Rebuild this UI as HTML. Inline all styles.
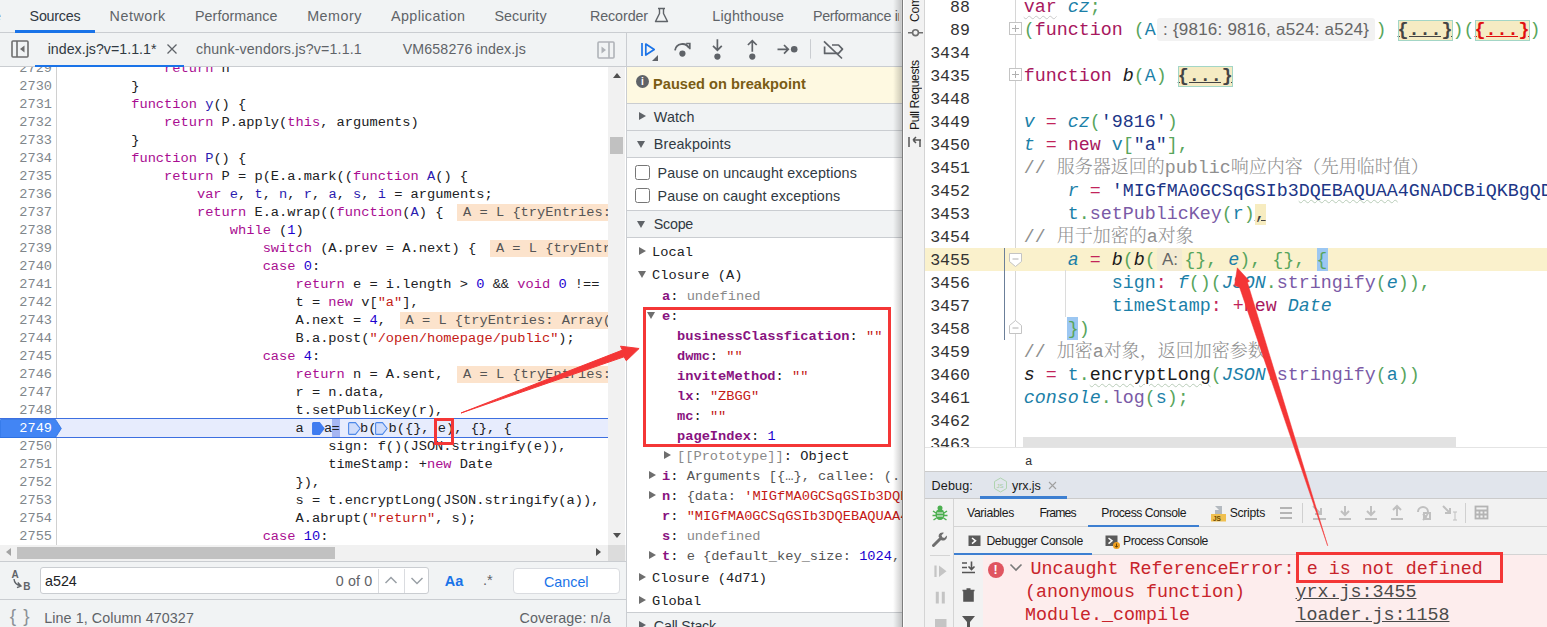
<!DOCTYPE html><html><head><meta charset="utf-8"><title>debug</title><style>
*{box-sizing:border-box;margin:0;padding:0}
html,body{width:1547px;height:627px;overflow:hidden;background:#fff}
body{position:relative;font-family:"Liberation Sans","Noto Sans CJK SC",sans-serif;color:#303942}
.abs{position:absolute}
.t{position:absolute;white-space:pre;line-height:1}
#dt{position:absolute;left:0;top:0;width:902px;height:627px;background:#fff;overflow:hidden}
#ide{position:absolute;left:901px;top:0;width:646px;height:627px}
.tab{position:absolute;top:0;height:32px;line-height:32px;font-size:14.3px;color:#5f6368;white-space:pre}
.ftab{position:absolute;top:33px;height:33px;line-height:33px;font-size:14.2px;color:#5f6368;white-space:pre}
.cl{position:absolute;left:0;width:609px;height:18px;line-height:18px;font-family:"Liberation Mono",monospace;font-size:13.7px;white-space:pre;color:#202124}
.ln{position:absolute;left:0;width:52px;text-align:right;color:#80868b;font-size:13.6px}
.cd{position:absolute;left:65.5px}
.k{color:#a90d91}.d{color:#2b1cb0}.s{color:#c41a16}.n{color:#1c00cf}
.iv{background:#fce3cc;color:#555;padding:1px 0 1px 6px;margin-left:5.5px}
.sh{position:absolute;left:627px;width:275px;height:27px;background:#f1f3f4;border-top:1px solid #cacdd1;font-size:14.3px;color:#303942;line-height:26px}
.sr{position:absolute;left:627px;width:275px;height:20px;line-height:20px;font-family:"Liberation Mono",monospace;font-size:13.7px;white-space:pre;color:#202124}
.pn{color:#881280;font-weight:bold}
.gy{color:#8a8a8a}
.tri{position:absolute;width:0;height:0}
.il{position:absolute;left:23px;width:623px;height:23px;line-height:23px;font-family:"Liberation Mono","Noto Sans CJK SC",monospace;font-size:18.33px;white-space:pre;color:#1a1a1a}
.iln{position:absolute;left:0;width:46px;text-align:right;color:#333;font-size:16.6px}
.icd{position:absolute;left:99.7px}
.cj{font-size:18px}.ik{color:#a8185e}.iv2{color:#1b7fa8;font-style:italic}.ip{color:#58a55c}.is{color:#1c3687}.ic{color:#8f8f8f;font-family:"Liberation Mono","Noto Serif CJK SC",monospace;font-weight:300}.im{color:#7a5aa6}.io{color:#c2245a}.it{color:#1b7fa8}
.fold{background:#f5ebc3;outline:1.5px solid #a3d6c6;outline-offset:-1.5px;color:#444;font-weight:bold;text-decoration:underline}
.ib{font-size:12.2px;color:#1a1a1a;position:absolute;white-space:pre}
.er{position:absolute;font-family:"Liberation Mono",monospace;font-size:18.33px;color:#c8242b;white-space:pre;height:23px;line-height:23px}
.lk{color:#4a4a4a;text-decoration:underline}
</style></head><body><div id="dt"><div class="abs" style="left:0;top:0;width:901px;height:33px;background:#f1f3f4;border-bottom:1px solid #cacdd1"></div><div class="tab" style="left:-7px">e</div><div class="tab" style="left:29.6px;letter-spacing:-0.251px;color:#303942;">Sources</div><div class="tab" style="left:109.6px;letter-spacing:0.522px;">Network</div><div class="tab" style="left:195px;letter-spacing:0.067px;">Performance</div><div class="tab" style="left:307.2px;letter-spacing:0.526px;">Memory</div><div class="tab" style="left:391px;letter-spacing:0.413px;">Application</div><div class="tab" style="left:494.5px;letter-spacing:0.055px;">Security</div><div class="tab" style="left:590px;letter-spacing:-0.102px;">Recorder</div><div class="tab" style="left:712.3px;letter-spacing:0.193px;">Lighthouse</div><div class="tab" style="left:813px;letter-spacing:-0.347px;width:85.5px;overflow:hidden;">Performance insights</div><div class="abs" style="left:15px;top:30.4px;width:80px;height:2.2px;background:#1a73e8"></div><svg class="abs" style="left:653px;top:7px" width="17" height="17" viewBox="0 0 17 17"><path d="M5 1.5h7M6.5 1.5v5L2.5 14.5h12L10.5 6.5v-5" fill="none" stroke="#5f6368" stroke-width="1.4" stroke-linejoin="round"/></svg><div class="abs" style="left:0;top:33px;width:627px;height:34px;background:#f1f3f4;border-bottom:1px solid #cacdd1"></div><svg class="abs" style="left:11px;top:40px" width="18" height="18" viewBox="0 0 18 18"><rect x="1" y="1" width="16" height="16" rx="1" fill="none" stroke="#6e6e6e" stroke-width="1.6"/><path d="M6 1v16" stroke="#6e6e6e" stroke-width="1.6"/><path d="M13.5 5.5v7L9 9z" fill="#6e6e6e"/></svg><div class="ftab" style="left:47.7px;color:#303942;letter-spacing:0.021px;">index.js?v=1.1.1*</div><svg class="abs" style="left:166px;top:43px" width="12" height="12" viewBox="0 0 12 12"><path d="M1.5 1.5l9 9M10.5 1.5l-9 9" stroke="#5f6368" stroke-width="1.3"/></svg><div class="abs" style="left:35px;top:64.5px;width:149px;height:2.1px;background:#1a73e8"></div><div class="ftab" style="left:196px;letter-spacing:0.158px;">chunk-vendors.js?v=1.1.1</div><div class="ftab" style="left:402.7px;letter-spacing:0.148px;">VM658276 index.js</div><svg class="abs" style="left:596.7px;top:40.7px" width="18" height="18" viewBox="0 0 18 18"><rect x="1" y="1" width="16" height="16" rx="1" fill="none" stroke="#b0b3b8" stroke-width="1.6"/><path d="M12 1v16" stroke="#b0b3b8" stroke-width="1.6"/><path d="M4.5 5.5v7L9 9z" fill="#b0b3b8"/></svg><div class="abs" style="left:0;top:67px;width:608px;height:478px;background:#fff;overflow:hidden"><div class="abs" style="left:0;top:0;width:57px;height:478px;background:#fff;border-right:1px solid #d0d0d0"></div><div class="cl" style="top:-7px"><span class="ln">2729</span><span class="cd">            <span class="k">return</span> n</span></div><div class="cl" style="top:11px"><span class="ln">2730</span><span class="cd">        }</span></div><div class="cl" style="top:29px"><span class="ln">2731</span><span class="cd">        <span class="k">function</span> <span class="d">y</span>() {</span></div><div class="cl" style="top:47px"><span class="ln">2732</span><span class="cd">            <span class="k">return</span> P.apply(<span class="k">this</span>, arguments)</span></div><div class="cl" style="top:65px"><span class="ln">2733</span><span class="cd">        }</span></div><div class="cl" style="top:83px"><span class="ln">2734</span><span class="cd">        <span class="k">function</span> <span class="d">P</span>() {</span></div><div class="cl" style="top:101px"><span class="ln">2735</span><span class="cd">            <span class="k">return</span> P = p(E.a.mark((<span class="k">function</span> <span class="d">A</span>() {</span></div><div class="cl" style="top:119px"><span class="ln">2736</span><span class="cd">                <span class="k">var</span> <span class="d">e</span>, <span class="d">t</span>, <span class="d">n</span>, <span class="d">r</span>, <span class="d">a</span>, <span class="d">s</span>, <span class="d">i</span> = arguments;</span></div><div class="cl" style="top:137px"><span class="ln">2737</span><span class="cd">                <span class="k">return</span> E.a.wrap((<span class="k">function</span>(<span class="d">A</span>) { <span class="iv">A = L {tryEntries: Array(3), prev: 4, next: 10}</span></span></div><div class="cl" style="top:155px"><span class="ln">2738</span><span class="cd">                    <span class="k">while</span> (<span class="n">1</span>)</span></div><div class="cl" style="top:173px"><span class="ln">2739</span><span class="cd">                        <span class="k">switch</span> (A.prev = A.next) { <span class="iv">A = L {tryEntries: Array(3), prev: 4}</span></span></div><div class="cl" style="top:191px"><span class="ln">2740</span><span class="cd">                        <span class="k">case</span> <span class="n">0</span>:</span></div><div class="cl" style="top:209px"><span class="ln">2741</span><span class="cd">                            <span class="k">return</span> e = i.length &gt; <span class="n">0</span> &amp;&amp; <span class="k">void</span> <span class="n">0</span> !== i[0] ? i[0] : {},</span></div><div class="cl" style="top:227px"><span class="ln">2742</span><span class="cd">                            t = <span class="k">new</span> v[<span class="s">&quot;a&quot;</span>],</span></div><div class="cl" style="top:245px"><span class="ln">2743</span><span class="cd">                            A.next = <span class="n">4</span>, <span class="iv">A = L {tryEntries: Array(3), prev: 4, next: 10}</span></span></div><div class="cl" style="top:263px"><span class="ln">2744</span><span class="cd">                            B.a.post(<span class="s">&quot;/open/homepage/public&quot;</span>);</span></div><div class="cl" style="top:281px"><span class="ln">2745</span><span class="cd">                        <span class="k">case</span> <span class="n">4</span>:</span></div><div class="cl" style="top:299px"><span class="ln">2746</span><span class="cd">                            <span class="k">return</span> n = A.sent, <span class="iv">A = L {tryEntries: Array(3), prev: 4, next: 10}</span></span></div><div class="cl" style="top:317px"><span class="ln">2747</span><span class="cd">                            r = n.data,</span></div><div class="cl" style="top:335px"><span class="ln">2748</span><span class="cd">                            t.setPublicKey(r),</span></div><div class="abs" style="left:0;top:351px;width:608px;height:20px;background:#e7ecfd;border-top:1.3px solid #3d6fe0;border-bottom:1.3px solid #3d6fe0"></div><svg class="abs" style="left:0;top:351.5px" width="63" height="19" viewBox="0 0 63 19"><path d="M0 1.5Q0 0.5 1 0.5H55.5L61.3 9.5 55.5 18.5H1Q0 18.5 0 17.5z" fill="#4285f4" stroke="#2a6fe0" stroke-width="0.8"/></svg><div class="cl" style="top:353px"><span class="ln" style="color:#fff">2749</span><span class="cd">                            a</span></div><svg class="abs" style="left:311.6px;top:355px" width="13" height="13" viewBox="0 0 13 13"><path d="M0.6 1.6Q0.6 0.6 1.6 0.6H7.5L12.2 6.5 7.5 12.4H1.6Q0.6 12.4 0.6 11.4z" fill="#3f7cf0" stroke="#3f7cf0" stroke-width="1.1" stroke-linejoin="round"/></svg><div class="abs" style="left:332px;top:352.3px;width:7.8px;height:17.4px;background:#a6b6f2"></div><div class="cl" style="top:353px"><span class="abs" style="left:324px;letter-spacing:-0.7px">a=</span></div><svg class="abs" style="left:347.6px;top:355px" width="13" height="13" viewBox="0 0 13 13"><path d="M0.6 1.6Q0.6 0.6 1.6 0.6H7.5L12.2 6.5 7.5 12.4H1.6Q0.6 12.4 0.6 11.4z" fill="#cfdcfb" stroke="#4d88e8" stroke-width="1.1" stroke-linejoin="round"/></svg><div class="cl" style="top:353px"><span class="abs" style="left:360px">b(</span></div><svg class="abs" style="left:375.4px;top:355px" width="13" height="13" viewBox="0 0 13 13"><path d="M0.6 1.6Q0.6 0.6 1.6 0.6H7.5L12.2 6.5 7.5 12.4H1.6Q0.6 12.4 0.6 11.4z" fill="#cfdcfb" stroke="#4d88e8" stroke-width="1.1" stroke-linejoin="round"/></svg><div class="cl" style="top:353px"><span class="abs" style="left:388.5px">b({}, e), {}, {</span></div><div class="cl" style="top:371px"><span class="ln">2750</span><span class="cd">                                sign: f()(JSON.stringify(e)),</span></div><div class="cl" style="top:389px"><span class="ln">2751</span><span class="cd">                                timeStamp: +<span class="k">new</span> Date</span></div><div class="cl" style="top:407px"><span class="ln">2752</span><span class="cd">                            }),</span></div><div class="cl" style="top:425px"><span class="ln">2753</span><span class="cd">                            s = t.encryptLong(JSON.stringify(a)),</span></div><div class="cl" style="top:443px"><span class="ln">2754</span><span class="cd">                            A.abrupt(<span class="s">&quot;return&quot;</span>, s);</span></div><div class="cl" style="top:461px"><span class="ln">2755</span><span class="cd">                        <span class="k">case</span> <span class="n">10</span>:</span></div></div><div class="abs" style="left:608px;top:67px;width:17px;height:478px;background:#f1f1f1"></div><div class="tri" style="left:613px;top:73px;border-left:4.5px solid transparent;border-right:4.5px solid transparent;border-bottom:5px solid #505050"></div><div class="tri" style="left:613px;top:533px;border-left:4.5px solid transparent;border-right:4.5px solid transparent;border-top:5px solid #505050"></div><div class="abs" style="left:610px;top:137px;width:13px;height:17px;background:#c1c1c1"></div><div class="abs" style="left:0;top:545px;width:627px;height:17px;background:#f1f1f1"></div><div class="abs" style="left:608px;top:545px;width:17px;height:17px;background:#dcdcdc"></div><div class="tri" style="left:6px;top:548px;border-top:4.5px solid transparent;border-bottom:4.5px solid transparent;border-right:5px solid #a3a3a3"></div><div class="tri" style="left:596px;top:548px;border-top:4.5px solid transparent;border-bottom:4.5px solid transparent;border-left:5px solid #505050"></div><div class="abs" style="left:17px;top:547px;width:318px;height:12px;background:#c1c1c1"></div><div class="abs" style="left:0;top:561px;width:627px;height:39px;background:#f1f3f4;border-top:1px solid #cacdd1;border-bottom:1px solid #cacdd1"></div><div class="t" style="left:11.5px;top:570px;font-size:10px;font-weight:bold;color:#5f6368">A</div><div class="t" style="left:23.3px;top:581.5px;font-size:10px;font-weight:bold;color:#5f6368">B</div><svg class="abs" style="left:12px;top:579px" width="12" height="10" viewBox="0 0 12 10"><path d="M2 0c0.3 3.5 2.5 6 6.5 6.8M5.8 3.5l3.2 3.4-4 1.8" fill="none" stroke="#5f6368" stroke-width="1.4"/></svg><div class="abs" style="left:40px;top:567px;width:389px;height:27px;background:#fff;border:1px solid #cacdd1;border-radius:3px"></div><div class="abs" style="left:378px;top:569px;width:1px;height:24px;background:#dadce0"></div><div class="abs" style="left:404px;top:569px;width:1px;height:24px;background:#dadce0"></div><div class="t" style="left:45px;top:574px;font-size:14.3px;color:#202124">a524</div><div class="t" style="left:335.7px;top:574px;font-size:14.3px;color:#5f6368;letter-spacing:0.137px;">0 of 0</div><svg class="abs" style="left:384px;top:575px" width="14" height="10" viewBox="0 0 14 10"><path d="M1.5 8l5.5-5.5L12.5 8" fill="none" stroke="#9aa0a6" stroke-width="1.5"/></svg><svg class="abs" style="left:410px;top:576px" width="14" height="10" viewBox="0 0 14 10"><path d="M1.5 2l5.5 5.5L12.5 2" fill="none" stroke="#9aa0a6" stroke-width="1.5"/></svg><div class="t" style="left:444.7px;top:574px;font-size:14.5px;font-weight:bold;color:#1a73e8">Aa</div><div class="t" style="left:483px;top:573px;font-size:14.5px;color:#5f6368">.*</div><div class="abs" style="left:513px;top:568px;width:107px;height:26px;background:#fff;border:1px solid #dadce0;border-radius:4px"></div><div class="t" style="left:544px;top:575px;font-size:14.3px;color:#1a73e8">Cancel</div><div class="abs" style="left:0;top:600px;width:627px;height:27px;background:#f1f3f4"></div><div class="t" style="left:9.8px;top:606px;font-size:19px;color:#8c9196;letter-spacing:7px">{}</div><div class="t" style="left:44.2px;top:611px;font-size:14.3px;color:#5f6368;letter-spacing:0.092px;">Line 1, Column 470327</div><div class="t" style="left:519.5px;top:611px;font-size:14.3px;color:#5f6368;letter-spacing:0.113px;">Coverage: n/a</div><div class="abs" style="left:626px;top:33px;width:1px;height:594px;background:#cacdd1"></div><div class="abs" style="left:627px;top:33px;width:275px;height:34px;background:#f1f3f4;border-bottom:1px solid #cacdd1"></div><svg class="abs" style="left:636px;top:37px" width="220" height="26" viewBox="0 0 220 26"><path d="M6 6.1V19" stroke="#1a73e8" stroke-width="1.7"/><path d="M9.8 7L18.2 12.5 9.8 18z" fill="none" stroke="#1a73e8" stroke-width="1.7" stroke-linejoin="round"/><path d="M22 18v6h-6z" fill="#5f6368"/><path d="M39 13.3A7.5 7.5 0 0 1 53 11" fill="none" stroke="#5f6368" stroke-width="1.8"/><path d="M50.2 6.5H53.8V12.3" fill="none" stroke="#5f6368" stroke-width="1.7"/><circle cx="46.4" cy="16.6" r="3.1" fill="#5f6368"/><path d="M81.4 2.2V13M77 8.8l4.4 4.4 4.4-4.4" fill="none" stroke="#5f6368" stroke-width="1.7"/><circle cx="81.4" cy="19.6" r="3.1" fill="#5f6368"/><path d="M116.3 14.8V3.8M111.9 8l4.4-4.4 4.4 4.4" fill="none" stroke="#5f6368" stroke-width="1.7"/><circle cx="116.3" cy="19.6" r="3.1" fill="#5f6368"/><path d="M141.5 12.3H152M148 8l4.3 4.3-4.3 4.3" fill="none" stroke="#5f6368" stroke-width="1.7"/><circle cx="158.2" cy="12.3" r="3.3" fill="#5f6368"/><path d="M174.5 2.2V21.6" stroke="#cacdd1" stroke-width="1"/><path d="M188.6 9.5V16.4H202.5L206.5 12.2 202.5 8H196" fill="none" stroke="#5f6368" stroke-width="1.7" stroke-linejoin="round"/><path d="M188 4.3L206 21.5" stroke="#5f6368" stroke-width="1.7"/></svg><div class="abs" style="left:627px;top:67px;width:275px;height:37px;background:#fef9e1"></div><div class="abs" style="left:636px;top:75px;width:13px;height:13px;border-radius:7px;background:#5f6368"></div><div class="t" style="left:641px;top:77px;font-size:10px;font-weight:bold;color:#fff">i</div><div class="t" style="left:653px;top:77px;font-size:14.6px;font-weight:bold;color:#7a5c14;letter-spacing:0.019px;">Paused on breakpoint</div><div class="sh" style="top:103px"><span class="abs" style="left:26.8px;letter-spacing:0.141px;">Watch</span></div><div class="tri" style="left:639px;top:112px;border-top:4.5px solid transparent;border-bottom:4.5px solid transparent;border-left:7px solid #5f6368"></div><div class="sh" style="top:130px"><span class="abs" style="left:26.8px;letter-spacing:0.153px;">Breakpoints</span></div><div class="tri" style="left:637px;top:141px;border-left:4.5px solid transparent;border-right:4.5px solid transparent;border-top:7px solid #5f6368"></div><div class="abs" style="left:627px;top:157px;width:275px;height:1px;background:#cacdd1"></div><div class="abs" style="left:635px;top:165px;width:15px;height:15px;border:1.5px solid #767676;border-radius:2.5px;background:#fff"></div><div class="t" style="left:657.5px;top:166px;font-size:14.3px;color:#303942;letter-spacing:0.14px;">Pause on uncaught exceptions</div><div class="abs" style="left:635px;top:188px;width:15px;height:15px;border:1.5px solid #767676;border-radius:2.5px;background:#fff"></div><div class="t" style="left:657.5px;top:189px;font-size:14.3px;color:#303942;letter-spacing:0.12px;">Pause on caught exceptions</div><div class="sh" style="top:210px"><span class="abs" style="left:26.8px;letter-spacing:-0.269px;">Scope</span></div><div class="tri" style="left:637px;top:221px;border-left:4.5px solid transparent;border-right:4.5px solid transparent;border-top:7px solid #5f6368"></div><div class="abs" style="left:627px;top:237px;width:275px;height:1px;background:#cacdd1"></div><div class="sr" style="top:243px"><span class="abs" style="left:25px">Local</span></div><div class="tri" style="left:639px;top:247px;border-top:4.5px solid transparent;border-bottom:4.5px solid transparent;border-left:7px solid #6e6e6e"></div><div class="sr" style="top:266px"><span class="abs" style="left:25px">Closure (A)</span></div><div class="tri" style="left:638px;top:271px;border-left:4.5px solid transparent;border-right:4.5px solid transparent;border-top:7px solid #6e6e6e"></div><div class="sr" style="top:287px"><span class="abs" style="left:35px"><span class="pn">a</span>: <span class="gy">undefined</span></span></div><div class="sr" style="top:307px"><span class="abs" style="left:35px"><span class="pn">e</span>:</span></div><div class="tri" style="left:647px;top:312px;border-left:4.5px solid transparent;border-right:4.5px solid transparent;border-top:7px solid #6e6e6e"></div><div class="sr" style="top:327px"><span class="abs" style="left:50px"><span class="pn">businessClassfication</span>: <span class="s">&quot;&quot;</span></span></div><div class="sr" style="top:347px"><span class="abs" style="left:50px"><span class="pn">dwmc</span>: <span class="s">&quot;&quot;</span></span></div><div class="sr" style="top:367px"><span class="abs" style="left:50px"><span class="pn">inviteMethod</span>: <span class="s">&quot;&quot;</span></span></div><div class="sr" style="top:387px"><span class="abs" style="left:50px"><span class="pn">lx</span>: <span class="s">&quot;ZBGG&quot;</span></span></div><div class="sr" style="top:407px"><span class="abs" style="left:50px"><span class="pn">mc</span>: <span class="s">&quot;&quot;</span></span></div><div class="sr" style="top:427px"><span class="abs" style="left:50px"><span class="pn">pageIndex</span>: <span class="n">1</span></span></div><div class="sr" style="top:447px"><span class="abs" style="left:50px"><span class="gy">[[Prototype]]</span>: Object</span></div><div class="tri" style="left:664px;top:451px;border-top:4.5px solid transparent;border-bottom:4.5px solid transparent;border-left:7px solid #6e6e6e"></div><div class="sr" style="top:467px"><span class="abs" style="left:35px"><span class="pn">i</span>: <span style="color:#555">Arguments [{…}, callee: (...), Symbol</span></span></div><div class="tri" style="left:649px;top:471px;border-top:4.5px solid transparent;border-bottom:4.5px solid transparent;border-left:7px solid #6e6e6e"></div><div class="sr" style="top:487px"><span class="abs" style="left:35px"><span class="pn">n</span>: <span style="color:#555">{data</span><span style="color:#555">: </span><span class="s">&#x27;MIGfMA0GCSqGSIb3DQEBAQUAA4GNADCBiQKBgQD</span></span></div><div class="tri" style="left:649px;top:491px;border-top:4.5px solid transparent;border-bottom:4.5px solid transparent;border-left:7px solid #6e6e6e"></div><div class="sr" style="top:507px"><span class="abs" style="left:35px"><span class="pn">r</span>: <span class="s">&quot;MIGfMA0GCSqGSIb3DQEBAQUAA4GNADCBiQKBgQD</span></span></div><div class="sr" style="top:527px"><span class="abs" style="left:35px"><span class="pn">s</span>: <span class="gy">undefined</span></span></div><div class="sr" style="top:547px"><span class="abs" style="left:35px"><span class="pn">t</span>: <span style="color:#555">e {default_key_size: </span><span class="n">1024</span><span style="color:#555">, default_public</span></span></div><div class="tri" style="left:649px;top:551px;border-top:4.5px solid transparent;border-bottom:4.5px solid transparent;border-left:7px solid #6e6e6e"></div><div class="sr" style="top:569px"><span class="abs" style="left:25px">Closure (4d71)</span></div><div class="tri" style="left:639px;top:573px;border-top:4.5px solid transparent;border-bottom:4.5px solid transparent;border-left:7px solid #6e6e6e"></div><div class="sr" style="top:592px"><span class="abs" style="left:25px">Global</span></div><div class="tri" style="left:639px;top:596px;border-top:4.5px solid transparent;border-bottom:4.5px solid transparent;border-left:7px solid #6e6e6e"></div><div class="sh" style="top:612px"><span class="abs" style="left:26.8px;letter-spacing:-0.217px;">Call Stack</span></div><div class="tri" style="left:639px;top:621px;border-top:4.5px solid transparent;border-bottom:4.5px solid transparent;border-left:7px solid #5f6368"></div><div class="abs" style="left:642.5px;top:306.5px;width:248px;height:140.3px;border:3px solid #f43636"></div><div class="abs" style="left:434.3px;top:418px;width:19.3px;height:27px;border:3px solid #f43636"></div><svg class="abs" style="left:440px;top:330px" width="220" height="100" viewBox="440 330 220 100"><path d="M461 413L622.4 350.1 620.5 346.2 639.1 348.5 626.3 360.8 624.1 356.8z" fill="#f43636" stroke="#f43636" stroke-width="1" stroke-linejoin="round"/></svg></div><div id="ide"><div class="abs" style="left:-8px;top:0;width:9px;height:627px;background:linear-gradient(90deg,rgba(0,0,0,0),rgba(0,0,0,0.2))"></div><div class="abs" style="left:1px;top:0;width:1.3px;height:627px;background:#7d7d7d"></div><div class="abs" style="left:3px;top:0;width:21px;height:627px;background:#f2f2f2;border-right:1px solid #d4d4d4"></div><div class="abs" style="left:7px;top:-38px;height:60px;width:14px;line-height:14px;font-size:12.2px;letter-spacing:-0.2px;color:#1a1a1a;writing-mode:vertical-rl;transform:rotate(180deg);white-space:pre">Commit</div><div class="abs" style="left:7px;top:50.3px;height:80px;width:14px;line-height:14px;font-size:12.2px;color:#1a1a1a;writing-mode:vertical-rl;transform:rotate(180deg);white-space:pre;letter-spacing:-0.421px;">Pull Requests</div><svg class="abs" style="left:6px;top:26px" width="16" height="14" viewBox="0 0 16 14"><circle cx="8.5" cy="6.7" r="2.9" fill="none" stroke="#6e6e6e" stroke-width="1.6"/><path d="M1 6.7h4.5M11.5 6.7h4.5" stroke="#6e6e6e" stroke-width="1.6"/></svg><svg class="abs" style="left:7px;top:136px" width="14" height="12" viewBox="0 0 14 12"><path d="M1 1v10M5 4h8M5 4l3-3M5 4l3 3M12 4v7" fill="none" stroke="#555" stroke-width="1.5"/></svg><div class="abs" style="left:114px;top:0;width:1px;height:448px;background:#d6d6d6"></div><div class="il" style="top:-4px"><span class="iln">88</span><span class="icd"><span class="ik" style="text-decoration:underline wavy #c8c8c8 1px;text-underline-offset:3px">var</span> <span class="iv2">cz</span><span class="ip">;</span></span></div><div class="il" style="top:19px"><span class="iln">89</span><span class="icd"><span class="ip">(</span><span class="ik">function</span> <span class="ip">(</span><span class="it">A</span><span style="font-family:'Liberation Sans',sans-serif;font-size:17px;line-height:14px;color:#666;background:#f2f2f2;border-radius:3px;padding:2px 5.7px 2px 1.4px;margin:0 0.7px 0 1px;letter-spacing:0.22px"> : {9816: 9816, a524: a524}</span><span class="ip">)</span> <span class="fold">{...}</span><span class="ip">)(</span><span class="fold" style="color:#e01010">{...}</span><span class="ip">)</span></span></div><div class="il" style="top:42px"><span class="iln">3434</span><span class="icd"></span></div><div class="il" style="top:65px"><span class="iln">3435</span><span class="icd"><span class="ik">function</span> <span style="font-style:italic;color:#1a1a1a">b</span><span class="ip">(</span><span class="it">A</span><span class="ip">)</span> <span class="fold">{...}</span></span></div><div class="il" style="top:88px"><span class="iln">3448</span><span class="icd"></span></div><div class="il" style="top:111px"><span class="iln">3449</span><span class="icd"><span class="iv2">v</span> <span class="io">=</span> <span class="iv2">cz</span><span class="ip">(</span><span class="is">&#x27;9816&#x27;</span><span class="ip">)</span></span></div><div class="il" style="top:134px"><span class="iln">3450</span><span class="icd"><span class="iv2">t</span> <span class="io">=</span> <span class="ik">new</span> <span class="it">v</span><span class="ip">[</span><span class="is">&quot;a&quot;</span><span class="ip">],</span></span></div><div class="il" style="top:157px"><span class="iln">3451</span><span class="icd"><span class="ic">// <span class="cj">服务器返回的</span>public<span class="cj">响应内容（先用临时值）</span></span></span></div><div class="il" style="top:180px"><span class="iln">3452</span><span class="icd">    <span class="iv2">r</span> <span class="io">=</span> <span class="is">&#x27;MIGfMA0GCSqGSIb3</span><span class="is" style="text-decoration:underline wavy #b8ccb8 1px;text-underline-offset:3px">DQEBAQUAA</span><span class="is">4GNADCBiQKBgQDA</span></span></div><div class="il" style="top:203px"><span class="iln">3453</span><span class="icd">    <span class="it">t</span><span class="ip">.</span><span class="im">setPublicKey</span><span class="ip">(</span><span class="it">r</span><span class="ip">)</span><span style="background:#f7ecc0;color:#444;text-decoration:underline">,</span></span></div><div class="il" style="top:226px"><span class="iln">3454</span><span class="icd"><span class="ic">// <span class="cj">用于加密的</span>a<span class="cj">对象</span></span></span></div><div class="abs" style="left:24px;top:248px;width:622px;height:22.7px;background:#faf1cc"></div><div class="abs" style="left:415.8px;top:248px;width:10.8px;height:22.7px;background:#9cc7f2"></div><div class="il" style="top:249px"><span class="iln">3455</span><span class="icd">    <span class="iv2">a</span> <span class="io">=</span> <span style="font-style:italic">b</span><span class="ip">(</span><span style="font-style:italic">b</span><span class="ip">(</span><span style="font-family:'Liberation Sans',sans-serif;font-size:17px;line-height:14px;color:#666;background:#f3ebd3;border-radius:3px;padding:2px 4.2px 2px 4.9px;margin:0 2.1px 0 1.4px">A:</span><span class="ip">{},</span> <span class="iv2">e</span><span class="ip">),</span> <span class="ip">{},</span> <span class="ip">{</span></span></div><div class="il" style="top:272px"><span class="iln">3456</span><span class="icd">        <span class="it">sign</span><span class="io">:</span> <span class="iv2">f</span><span class="ip">()(</span><span class="iv2">JSON</span><span class="ip">.</span><span class="im">stringify</span><span class="ip">(</span><span class="iv2">e</span><span class="ip">)),</span></span></div><div class="il" style="top:295px"><span class="iln">3457</span><span class="icd">        <span class="it">timeStamp</span><span class="io">:</span> <span class="io">+</span><span class="ik">new</span> <span class="iv2">Date</span></span></div><div class="abs" style="left:166px;top:317px;width:10.8px;height:22.7px;background:#9cc7f2"></div><div class="il" style="top:318px"><span class="iln">3458</span><span class="icd">    <span class="ip">}</span><span class="ip">)</span></span></div><div class="il" style="top:341px"><span class="iln">3459</span><span class="icd"><span class="ic">// <span class="cj">加密</span>a<span class="cj">对象，返回加密参数</span></span></span></div><div class="il" style="top:364px"><span class="iln">3460</span><span class="icd"><span style="font-style:italic">s</span> <span class="io">=</span> <span class="it">t</span><span class="ip">.</span><span style="text-decoration:underline wavy #b8ccb8 1px;text-underline-offset:3px">encryptLong</span><span class="ip">(</span><span class="iv2">JSON</span><span class="ip">.</span><span class="im">stringify</span><span class="ip">(</span><span class="it">a</span><span class="ip">))</span></span></div><div class="il" style="top:387px"><span class="iln">3461</span><span class="icd"><span class="iv2">console</span><span class="ip">.</span><span class="im">log</span><span class="ip">(</span><span class="it">s</span><span class="ip">);</span></span></div><div class="il" style="top:410px"><span class="iln">3462</span><span class="icd"></span></div><div class="il" style="top:433px"><span class="iln">3463</span><span class="icd"></span></div><div class="abs" style="left:108px;top:22px;width:13px;height:13px;background:#fff;border:1px solid #c4c4c4"></div><div class="abs" style="left:111px;top:28px;width:7px;height:1px;background:#b0b0b0"></div><div class="abs" style="left:114px;top:25px;width:1px;height:7px;background:#b0b0b0"></div><div class="abs" style="left:108px;top:68px;width:13px;height:13px;background:#fff;border:1px solid #c4c4c4"></div><div class="abs" style="left:111px;top:74px;width:7px;height:1px;background:#b0b0b0"></div><div class="abs" style="left:114px;top:71px;width:1px;height:7px;background:#b0b0b0"></div><div class="abs" style="left:103px;top:248px;width:1px;height:92px;background:#6b7f99"></div><svg class="abs" style="left:108px;top:253px" width="14" height="14" viewBox="0 0 14 14"><path d="M0.5 0.5h12v8l-6 5-6-5z" fill="#fff" stroke="#c4c4c4"/><path d="M3.5 6h6" stroke="#b0b0b0"/></svg><svg class="abs" style="left:108px;top:320px" width="14" height="14" viewBox="0 0 14 14"><path d="M0.5 13.5h12v-8l-6-5-6 5z" fill="#fff" stroke="#c4c4c4"/><path d="M3.5 8h6" stroke="#b0b0b0"/></svg><div class="abs" style="left:164px;top:270px;width:1px;height:47px;background:#dcdcdc"></div><div class="abs" style="left:115px;top:437px;width:531px;height:11px;background:#fff"></div><div class="abs" style="left:122px;top:437px;width:433px;height:10px;background:#e2e2e2"></div><div class="abs" style="left:24px;top:447px;width:622px;height:24px;background:#fff;border-top:1px solid #e4e4e4"></div><div class="t" style="left:124px;top:455.5px;font-size:12.5px;color:#333;font-family:'Liberation Mono',monospace">a</div><div class="abs" style="left:24px;top:471px;width:622px;height:28px;background:#e1e5ec;border-top:1px solid #cbcbcb;border-bottom:1px solid #cbcbcb"></div><div class="ib" style="left:30.5px;top:478.5px;font-size:12.6px;letter-spacing:0.145px;">Debug:</div><svg class="abs" style="left:92px;top:477px" width="15" height="16" viewBox="0 0 15 16"><path d="M7.5 1l6 3.5v7l-6 3.5-6-3.5v-7z" fill="none" stroke="#b0d4b0" stroke-width="1"/><text x="3.5" y="10.5" font-size="6" font-family="Liberation Sans" fill="#a4cca4">JS</text></svg><div class="ib" style="left:111px;top:478.5px;font-size:12.6px;letter-spacing:-0.116px;">yrx.js</div><svg class="abs" style="left:147px;top:481px" width="9" height="9" viewBox="0 0 9 9"><path d="M1 1l7 7M8 1l-7 7" stroke="#a0a0a0" stroke-width="1.1"/></svg><div class="abs" style="left:79px;top:496px;width:87px;height:3px;background:#3d7fd1"></div><div class="abs" style="left:24px;top:499px;width:29px;height:128px;background:#f2f2f2;border-right:1px solid #d4d4d4"></div><div class="abs" style="left:53px;top:499px;width:593px;height:28px;background:#f2f2f2;border-bottom:1px solid #d4d4d4"></div><div class="abs" style="left:53px;top:527px;width:593px;height:28px;background:#f2f2f2;border-bottom:1px solid #d4d4d4"></div><div class="abs" style="left:53px;top:555px;width:29px;height:72px;background:#f2f2f2"></div><div class="abs" style="left:82px;top:555px;width:564px;height:72px;background:#fdeded"></div><div class="ib" style="left:66px;top:506px;letter-spacing:-0.328px;">Variables</div><div class="ib" style="left:138.4000000000001px;top:506px;letter-spacing:-0.841px;">Frames</div><div class="ib" style="left:200.29999999999995px;top:506px;letter-spacing:-0.501px;">Process Console</div><div class="ib" style="left:328.70000000000005px;top:506px;letter-spacing:-0.284px;">Scripts</div><div class="abs" style="left:187px;top:524.5px;width:111px;height:2.3px;background:#3d7fd1"></div><div class="ib" style="left:85.4px;top:534px;letter-spacing:-0.321px;">Debugger Console</div><div class="ib" style="left:222px;top:534px;letter-spacing:-0.481px;">Process Console</div><div class="abs" style="left:53px;top:552.5px;width:138px;height:2.5px;background:#3d7fd1"></div><svg class="abs" style="left:66.5px;top:535px" width="14" height="12" viewBox="0 0 14 12"><rect x="0.5" y="0.5" width="12" height="10.5" fill="#5a5a5a"/><path d="M4 3l3.5 2.8L4 8.6" fill="none" stroke="#fff" stroke-width="1.5"/></svg><svg class="abs" style="left:203.5px;top:535px" width="16" height="15" viewBox="0 0 16 15"><rect x="0.5" y="0.5" width="12" height="10.5" fill="#5a5a5a"/><path d="M3.5 3l3.5 2.8-3.5 2.8" fill="none" stroke="#fff" stroke-width="1.5"/><circle cx="11.5" cy="10.5" r="3.5" fill="#f0a020"/><path d="M11.5 8.5v3.5M10 10.8l1.5 1.5 1.5-1.5" stroke="#5a3a00" stroke-width="0.9" fill="none"/></svg><svg class="abs" style="left:310px;top:505px" width="18" height="18" viewBox="0 0 18 18"><path d="M4 1h7v8H4z" fill="#b4bac0"/><path d="M4 1v4H8z" fill="#f2f2f2"/><rect x="0" y="9" width="15" height="7.5" fill="#f0c050"/><text x="2" y="15.5" font-size="6.5" font-weight="bold" font-family="Liberation Sans" fill="#6a4a00">JS</text></svg><svg class="abs" style="left:370px;top:503px" width="240" height="20" viewBox="1271 503 240 20"><path d="M1280 508h12M1280 513h12M1280 518h12" stroke="#b4b4b4" stroke-width="2.2"/><path d="M1302.5 503v20" stroke="#d0d0d0"/><g stroke="#c0c0c0" stroke-width="2" fill="none"><path d="M1313 506l8 8M1321 508v6h-6M1313 519h13"/><path d="M1345 506v9M1341 511l4 4 4-4M1339 519h12"/><path d="M1371 506v9M1367 511l4 4 4-4M1365 519h12"/><path d="M1397 516v-10M1393 510l4-4 4 4M1391 519h12"/><path d="M1418 512a5 5 0 1 1 5 5M1423 514l3 3-3 3"/><rect x="1424" y="513" width="6" height="6"/><path d="M1443 506l7 7M1450 508v5h-5"/><path d="M1455 512v8M1453 512h4M1453 520h4" stroke-width="1"/></g><path d="M1465.5 503v20" stroke="#d0d0d0"/><g stroke="#b4b4b4" stroke-width="1.8" fill="none"><rect x="1475.5" y="506.5" width="12" height="12"/><path d="M1475.5 510.5h12M1475.5 514.5h12M1479.5 510.5v8M1483.5 510.5v8"/></g></svg><svg class="abs" style="left:30px;top:504px" width="18" height="18" viewBox="0 0 18 18"><ellipse cx="9" cy="10.5" rx="4.5" ry="5.5" fill="#4caf50"/><circle cx="9" cy="4" r="2.5" fill="#4caf50"/><path d="M2 7l3 2M16 7l-3 2M1.5 11.5h3.5M16.5 11.5h-3.5M2.5 16l3-2M15.5 16l-3-2" stroke="#4caf50" stroke-width="1.5"/><path d="M6 9h6M6 12h6" stroke="#f2f2f2" stroke-width="1.1"/></svg><svg class="abs" style="left:31px;top:531px" width="16" height="16" viewBox="0 0 16 16"><path d="M1.5 14.5l7-7" stroke="#6e6e6e" stroke-width="3" stroke-linecap="round"/><path d="M8 5.5a4 4 0 0 1 5.5-3.8l-2.5 2.5 0.8 2 2 0.8 2.5-2.5A4 4 0 0 1 10.5 9z" fill="#6e6e6e" transform="translate(-1.5,0)"/></svg><div class="abs" style="left:29px;top:555px;width:20px;height:1px;background:#d4d4d4"></div><svg class="abs" style="left:32px;top:561px" width="16" height="66" viewBox="0 0 16 66"><path d="M2.5 4.5v11.5" stroke="#c4c4c4" stroke-width="2.2"/><path d="M6 4.5l7.5 5.7-7.5 5.8z" fill="#c4c4c4"/><path d="M4.3 30.8v11.6M10.3 30.8v11.6" stroke="#c4c4c4" stroke-width="3"/><rect x="2" y="58" width="11.5" height="8" fill="#c4c4c4"/></svg><svg class="abs" style="left:59px;top:560px" width="18" height="67" viewBox="0 0 18 67"><path d="M2 3h5M2 7.5h5M2 12.5h13M11.5 1.5v8M8.5 6.5l3 3 3-3" stroke="#555" stroke-width="1.6" fill="none"/><path d="M4 32h9v9H4zM2.5 30.5h12M6.5 29h4" stroke="#555" stroke-width="1.6" fill="#555"/><path d="M2 56h13l-5 6v5h-3v-5z" fill="#555"/></svg><div class="abs" style="left:87px;top:562px;width:16px;height:16px;border-radius:8px;background:#e05560"></div><div class="t" style="left:92.5px;top:564px;font-size:12.5px;font-weight:bold;color:#fff">!</div><svg class="abs" style="left:108px;top:563px" width="14" height="10" viewBox="0 0 14 10"><path d="M1.5 1.5l5.5 5.5 5.5-5.5" fill="none" stroke="#7a7a7a" stroke-width="1.6"/></svg><div class="er" style="left:129.5px;top:558px">Uncaught ReferenceError:<span style="margin-left:1.3px"> e is not defined</span></div><div class="er" style="left:124px;top:581px">(anonymous function)</div><div class="er lk" style="left:394.5px;top:581px">yrx.js:3455</div><div class="er" style="left:124px;top:604px">Module._compile</div><div class="er lk" style="left:394.5px;top:604px">loader.js:1158</div><div class="abs" style="left:395px;top:552px;width:207px;height:31px;border:3px solid #f43636"></div><svg class="abs" style="left:320px;top:250px" width="120" height="310" viewBox="320 250 120 310"><path d="M336.3 267.8L348.6 281.2 346.5 282.5 426.7 545.8 338.6 287.4 333.5 285.5z" fill="#f43636" stroke="#f43636" stroke-width="0.5" stroke-linejoin="round"/></svg></div></body></html>
